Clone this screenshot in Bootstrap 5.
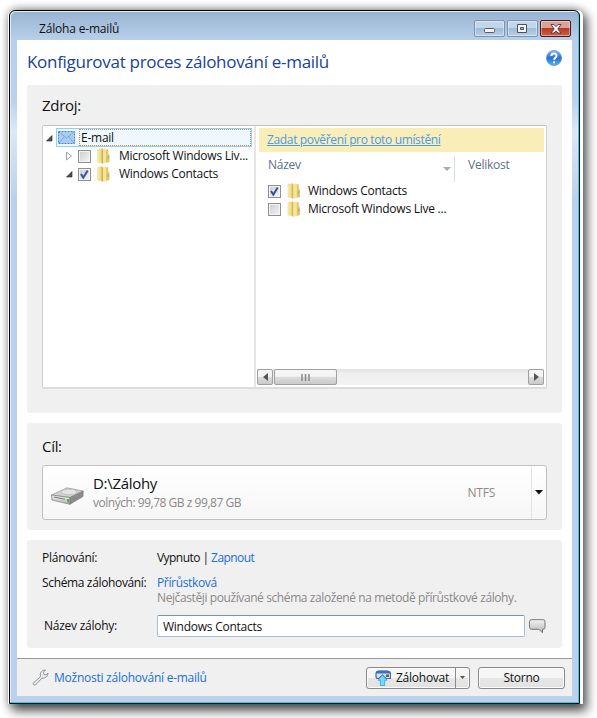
<!DOCTYPE html>
<html lang="cs">
<head>
<meta charset="utf-8">
<title>Záloha e-mailů</title>
<link href="https://cdn.jsdelivr.net/npm/bootstrap@5.3.0/dist/css/bootstrap.min.css" rel="stylesheet">
<style>
html,body{height:718px;overflow:hidden;background:#fff}
body{font:12px/18px "Open Sans","Noto Sans",sans-serif;color:#111;padding:10px 0 0 9px;letter-spacing:-.25px;white-space:nowrap}
.win{width:571px;height:694px;border:1px solid #000;border-radius:6px 6px 0 0;background:linear-gradient(#98b3d0 0,#b7cfe9 28px,#bbd2ec 90px,#dbe8f6 120px,#b9d1ea 190px);box-shadow:inset -1px -1px 0 #27d3ea,inset 1px 1px 0 #e4eef8,-1px 0 0 #fff,3px 0 0 #fff,5px 5px 11px 2px rgba(0,0,0,.65),0 0 8px 1px rgba(0,0,0,.3);padding:0 7px}
.titlebar{height:29px;padding:9px 1px 0 22px;letter-spacing:-.18px;line-height:17px}
.wbtns{gap:2px}
.wbtn{width:31px;height:17px;border:1px solid #7a93b0;border-radius:2px;background:linear-gradient(#c3d5e9 0 45%,#a2bbd6 50%,#b8cfe8);box-shadow:inset 0 0 0 1px rgba(255,255,255,.4)}
.wclose{border-color:#4a1a20;background:linear-gradient(#dba297 0 45%,#b93a24 50%,#cf6045)}
.client{height:656px;background:#fff}
.head{height:45px;padding:0 10px}
.head svg{margin-top:10px}
.title{font-size:17px;line-height:24px;color:#17439c;letter-spacing:-.29px;margin-top:10px}
.panel{background:#f0f0f0;border-radius:3px;margin:0 10px;padding:0 15px}
.cap{font-size:15px;line-height:20px;letter-spacing:-.3px}
.p1{height:328px;padding-top:10px}
.p2{height:107px;margin-top:10px;padding-top:13px}
.p3{height:108px;margin-top:10px;padding-top:9px}
.box{height:264px;margin-top:10px;border:1px solid #d0d0d0;border-top-color:#c2c2c2;border-bottom:2px solid #dcdcdc;border-radius:2px;background:#fff}
.tree{width:211px;padding-top:2px}
.tree .root{padding-left:2px}
.root>svg{margin-right:3px}
.split{width:2px;background:#e6e6e6}
.node{height:18px}
.tree .node{padding-left:22px}
.list .node{padding-left:12px}
.tree .chk{margin-left:1px}
.fold{margin:0 8px 0 5px}
.list .fold{margin:0 7px 0 6px}
.sel{width:196px;height:19px;border:1px solid #8ed2f3;background:#eef8fe;padding-left:1px}
.foc{height:17px;border:1px dotted #c88a4a;padding-left:1px;line-height:15px}
.chk{width:13px;height:13px;border:1px solid #8e8f8f;background:linear-gradient(135deg,#c9ccd1,#f6f6f6);box-shadow:inset 0 0 0 1px #f4f4f4;flex:none}
.yellow{height:24px;background:#f9edb8;margin:2px 2px 0 3px;padding:3px 8px;letter-spacing:-.35px}
.yellow a{color:#4a9be8;text-decoration:underline}
.hd{height:30px;color:#5d6f86;padding-top:4px}
.hcol{width:199px;height:26px;padding-left:12px;padding-right:3px;border-right:1px solid #d5dfea;line-height:17px}
.hcol svg{margin-top:11px}
.hcol2{padding-left:13px;line-height:17px}
.sb{height:16px;background:linear-gradient(#e2e2e2,#efefef 30%,#f2f2f2);margin:0 2px 2px 1px}
.sbb{width:16px;height:16px;border:1px solid #a0a0a0;border-radius:2px;background:linear-gradient(#f5f5f5 0 45%,#dcdcdc 52%,#c9cacc)}
.thumb{width:63px;margin-left:1px}
.drive{height:55px;margin-top:9px;border:1px solid #c3bfbf;border-radius:3px;background:linear-gradient(#fff,#f6f6f6)}
.hdd{margin:7px 9px 0 8px}
.drive .cap{margin-top:-1px}
.free{letter-spacing:-.47px;margin-top:1px}
.fs{margin-right:36px}
.drop{width:15px;border-left:1px solid #e4e4e4;padding-left:3px}
.gr{color:#8c8888}
.desc{letter-spacing:-.4px}
.lk{color:#1c6fd8;text-decoration:none}
.sep{letter-spacing:-.55px}
.lab{width:115px}
.scheme{margin-top:8px;line-height:15px}
.scheme .lab,.scheme .lk{letter-spacing:-.35px}
.inrow{margin-top:10px}
.inrow .lab{padding-left:2px}
.inrow svg{margin-left:4px}
.inp{width:368px;height:22px;border:1px solid #a9bdcf;border-top-color:#7e93a8;border-radius:2px;background:#fff;padding:0 5px;line-height:21px}
.foot{height:38px;margin-top:10px;border-top:1px solid #9a9a9a;background:#f0f0f0;padding:0 7px 0 15px}
.foot>svg,.wb>svg{margin-right:5px}
.wb{height:22px;border:1px solid #8a8a8a;border-radius:3px;background:linear-gradient(#f6f6f6 0 48%,#e6e6e6 52%,#e2e2e2);box-shadow:inset 0 0 0 1px #fbfbfb;line-height:20px}
.go{width:104px;padding-left:8px}
.go div{width:14px;border-left:1px solid #8a8a8a}
.cancel{width:87px;margin-left:8px}
svg{flex:none;display:block}
</style>
</head>
<body>
<svg width="0" height="0" class="position-absolute"><defs>
<linearGradient id="gy"><stop offset="0" stop-color="#fbf1bd"/><stop offset=".6" stop-color="#f0da82"/><stop offset="1" stop-color="#d9b94e"/></linearGradient>
<linearGradient id="gb" x2="0" y2="1"><stop offset="0" stop-color="#8db9ee"/><stop offset=".5" stop-color="#2a6fd4"/><stop offset="1" stop-color="#4fb5f5"/></linearGradient>
<linearGradient id="gg" x2="0" y2="1"><stop offset="0" stop-color="#f4f4f4"/><stop offset="1" stop-color="#b5b5b5"/></linearGradient>
<symbol id="folder" viewBox="0 0 14 16"><path d="M1 1.500l5-1v14.500l-5-1z" fill="url(#gy)" stroke="#e2cf84" stroke-width=".5"/><path d="M5.500 2.500l1-1.500v14.500l-1 .2z" fill="#cfae45"/><path d="M6.500 1.200l3-.9v14.500l-3 1z" fill="#f5e59c"/><path d="M9.500 1.200h2.300v4.500l1.200.8v7.500l-3.500.9z" fill="#e4c863"/><path d="M11.600 8v3" stroke="#8fa8b8"/></symbol>
<symbol id="tick" viewBox="0 0 11 11"><path d="M2 5l2.300 3.700L8.700 1.500" fill="none" stroke="#3b4f96" stroke-width="2"/></symbol>
<symbol id="open" viewBox="0 0 8 8"><path d="M7 1.500v5.500H1.500z" fill="#505050" stroke="#222" stroke-width=".6"/></symbol>
</defs></svg>
<div class="win">
 <div class="titlebar d-flex justify-content-between">
  <span>Záloha e-mailů</span>
  <div class="wbtns d-flex">
   <div class="wbtn d-flex align-items-center justify-content-center"><svg width="12" height="11"><rect x=".5" y="5.500" width="10" height="4" rx="1" fill="#f4f4f4" stroke="#555b66"/></svg></div>
   <div class="wbtn d-flex align-items-center justify-content-center"><svg width="11" height="9"><path d="M.5.5h9v8h-9zM3.500 3.500h3v2h-3z" fill="#f4f4f4" fill-rule="evenodd" stroke="#4a5260"/></svg></div>
   <div class="wbtn wclose d-flex align-items-center justify-content-center"><svg width="12" height="10"><path d="M1 .5h3l2 2.200L8 .5h3L7.800 5 11 9H8L6 6.900 4 9H1l3.200-4z" fill="#f6f6f6" stroke="#4a3a44" stroke-width=".9"/></svg></div>
  </div>
 </div>
 <div class="client">
  <div class="head d-flex justify-content-between">
   <span class="title">Konfigurovat proces zálohování e-mailů</span>
   <svg width="16" height="16"><circle cx="8" cy="8" r="7.600" fill="url(#gb)" stroke="#5a90da" stroke-width=".7"/><path d="M5.300 6C5.500 2.500 10.800 2.800 10.500 6c-.2 1.800-2.400 1.700-2.400 3.800M8.100 11.200v2" fill="none" stroke="#fff" stroke-width="1.900"/></svg>
  </div>
  <div class="panel p1">
   <div class="cap">Zdroj:</div>
   <div class="box d-flex">
    <div class="tree">
     <div class="root d-flex align-items-center"><svg width="8" height="8"><use href="#open"/></svg>
      <div class="sel d-flex align-items-center">
       <svg width="17" height="13" class="me-1"><rect x=".5" y=".5" width="16" height="12" fill="#a9cdf0" stroke="#4d83c4" stroke-dasharray="2 1"/><path d="M1 1l7.500 6L16 1M1 12l5-6M16 12l-5-6" fill="none" stroke="#5f94cf" stroke-dasharray="1.500 .8"/></svg>
       <div class="foc flex-fill">E-mail</div></div></div>
     <div class="node d-flex align-items-center"><svg width="8" height="10" class="me-1"><path d="M1.500 1l5 4-5 4z" fill="#fff" stroke="#a0a0a0"/></svg><i class="chk"></i><svg class="fold" width="15" height="16"><use href="#folder"/></svg><span>Microsoft Windows Liv...</span></div>
     <div class="node d-flex align-items-center"><svg width="8" height="8" class="me-1"><use href="#open"/></svg><i class="chk"><svg width="11" height="11"><use href="#tick"/></svg></i><svg class="fold" width="15" height="16"><use href="#folder"/></svg><span>Windows Contacts</span></div>
    </div>
    <div class="split"></div>
    <div class="list flex-fill d-flex flex-column">
     <div class="yellow"><a href="#">Zadat pověření pro toto umístění</a></div>
     <div class="hd d-flex"><div class="hcol d-flex justify-content-between"><span>Název</span><svg width="8" height="5"><path d="M0 0h8L4 4z" fill="#a6aab0"/></svg></div><span class="hcol2">Velikost</span></div>
     <div class="node d-flex align-items-center"><i class="chk"><svg width="11" height="11"><use href="#tick"/></svg></i><svg class="fold" width="14" height="16"><use href="#folder"/></svg><span>Windows Contacts</span></div>
     <div class="node d-flex align-items-center"><i class="chk"></i><svg class="fold" width="14" height="16"><use href="#folder"/></svg><span>Microsoft Windows Live ...</span></div>
     <div class="sb mt-auto d-flex">
      <div class="sbb d-flex align-items-center justify-content-center"><svg width="5" height="8"><path d="M5 0v8L0 4z" fill="#555"/></svg></div>
      <div class="sbb thumb d-flex align-items-center justify-content-center"><svg width="9" height="7"><path d="M1 0v7M4.500 0v7M8 0v7" stroke="#888" stroke-width="1.500"/></svg></div>
      <div class="sbb ms-auto d-flex align-items-center justify-content-center"><svg width="5" height="8"><path d="M0 0v8l5-4z" fill="#555"/></svg></div>
     </div>
    </div>
   </div>
  </div>
  <div class="panel p2">
   <div class="cap">Cíl:</div>
   <div class="drive d-flex align-items-center">
    <svg class="hdd" width="33" height="18"><path d="M.5 8L16 .8 32 4 19 10.500z" fill="#d2d2d2" stroke="#999" stroke-width=".7"/><path d="M.5 8L19 10.500v6.800L1 13z" fill="url(#gg)" stroke="#777" stroke-width=".7"/><path d="M19 10.500L32.300 4l-.3 5.500-13 7.800z" fill="#8b8b8b" stroke="#777" stroke-width=".6"/><ellipse cx="18" cy="5" rx="8" ry="2.800" fill="#e4e4e4" stroke="#b5b5b5" stroke-width=".7"/><path d="M3 10l11 2.300" stroke="#777"/><path d="M17 12v3.500" stroke="#3ca52e" stroke-width="1.600"/></svg>
    <div><div class="cap">D:\Zálohy</div><div class="gr free">volných: 99,78 GB z 99,87 GB</div></div>
    <div class="gr fs ms-auto">NTFS</div>
    <div class="drop h-100 d-flex align-items-center"><svg width="8" height="5"><path d="M0 0h8L4 4.500z" fill="#111"/></svg></div>
   </div>
  </div>
  <div class="panel p3">
   <div class="d-flex"><div class="lab">Plánování:</div><span class="sep">Vypnuto | <a href="#" class="lk">Zapnout</a></span></div>
   <div class="scheme d-flex"><div class="lab">Schéma zálohování:</div><div><a href="#" class="lk">Přírůstková</a><div class="gr desc">Nejčastěji používané schéma založené na metodě přírůstkové zálohy.</div></div></div>
   <div class="inrow d-flex align-items-center"><div class="lab">Název zálohy:</div><div class="inp">Windows Contacts</div><svg width="17" height="15"><path d="M2.500.7h11.500q2 0 2 2v5.600q0 2-2 2h-.5v3.500l-3.500-3.500H2.500q-2 0-2-2V2.700q0-2 2-2z" fill="url(#gg)" stroke="#777"/></svg></div>
  </div>
  <div class="foot d-flex align-items-center">
   <svg width="17" height="17"><path d="M1 14.500L8.500 7.500C7.500 3.500 10 1 13.500 1L11.500 3.300l.5 2.200 2.200.5L16 4c0 3.500-2.500 5.500-6 5L3.500 16Q1.500 16.500 1 14.500z" fill="#e9edf0" stroke="#85898d" stroke-width=".9"/></svg>
   <a href="#" class="lk">Možnosti zálohování e-mailů</a>
   <div class="wb go ms-auto d-flex align-items-center"><svg width="16" height="16"><path d="M1 4Q1 1 4 1h8.500Q15.500 1 15.500 4v4.500H11L7.500 5 4 8.500H3Q1 8.500 1 6.500z" fill="#dce4ef" stroke="#3b66b2" stroke-width="1.200"/><path d="M1 3.500Q1 .8 4 .8h8.500Q15.500.8 15.500 3.500z" fill="#3f6fc0"/><path d="M11 4.500h3v2.500h-3z" fill="#596b3a"/><path d="M7.500 5.200l4.500 5H9.700V15.500H5.300V10.200H3z" fill="#7dd6f8" stroke="#3a9fd8" stroke-width=".8"/></svg><span>Zálohovat</span><div class="ms-auto h-100 d-flex align-items-center justify-content-center"><svg width="5" height="3"><path d="M0 0h5L2.500 3z" fill="#555"/></svg></div></div>
   <div class="wb cancel text-center">Storno</div>
  </div>
 </div>
</div>
<script src="https://cdn.jsdelivr.net/npm/bootstrap@5.3.0/dist/js/bootstrap.bundle.min.js"></script>
</body>
</html>
